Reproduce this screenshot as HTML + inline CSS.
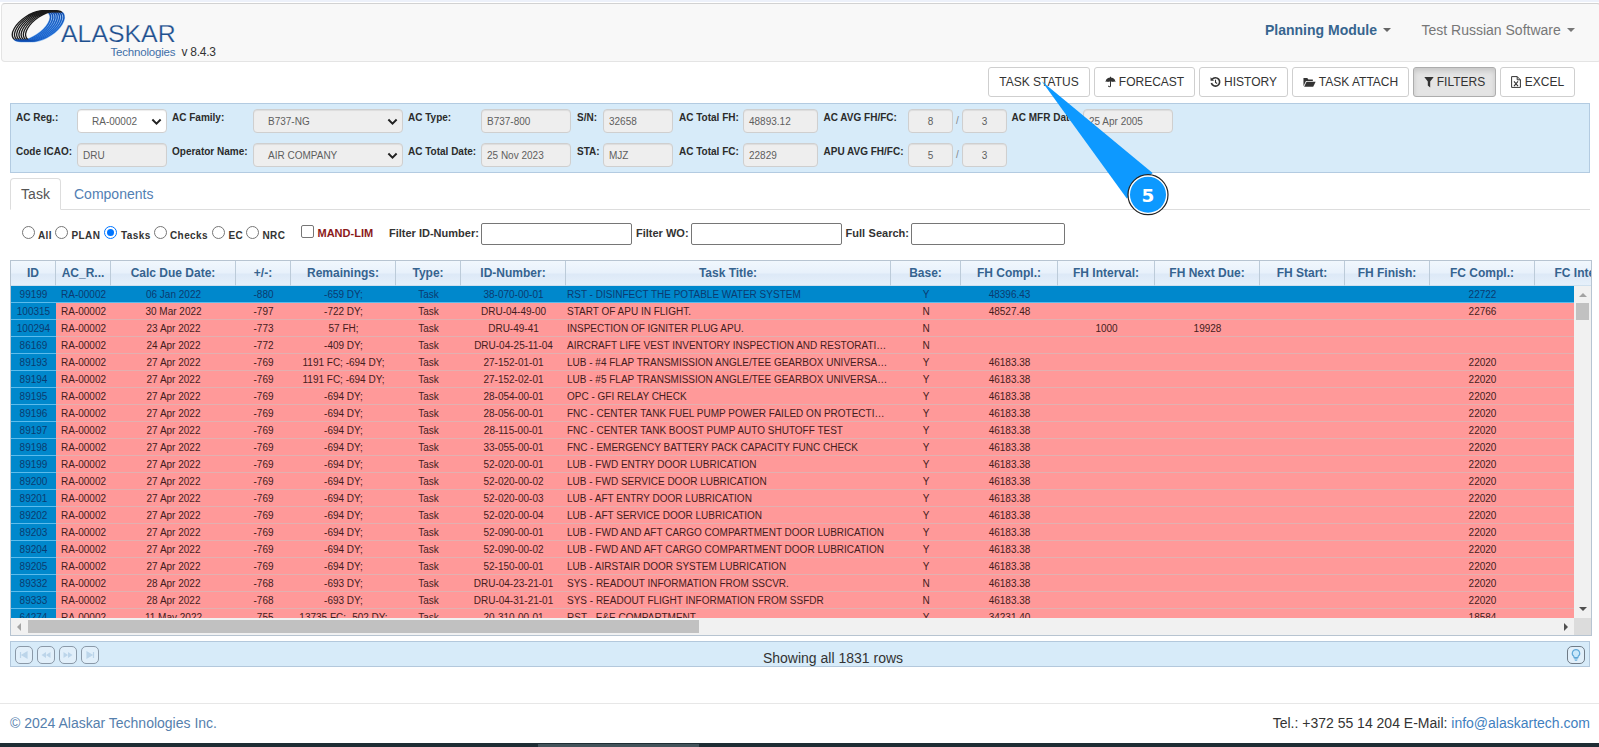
<!DOCTYPE html>
<html lang="en"><head><meta charset="utf-8"><title>Alaskar Technologies - Planning Module</title>
<style>
*{box-sizing:border-box}
html,body{margin:0;padding:0}
body{width:1599px;height:747px;overflow:hidden;background:#fff;position:relative;font-family:"Liberation Sans",Arial,Helvetica,sans-serif;font-size:14px;color:#333}
.abs,.lbl,.inp,.slash,.radio,.rl,.cbx,.tin,.btn{position:absolute}
#topstrip{left:0;top:0;width:1599px;height:2px;background:#edf1fa;position:absolute}
#nav{position:absolute;left:1px;top:3px;width:1600px;height:59px;background:#f8f8f8;border:1px solid #e4e4e4;border-top-color:#d2d2d2;border-radius:4px}
#ring{position:absolute;left:9px;top:4px}
#brand{position:absolute;left:59px;top:15.5px;font-size:24px;line-height:28px;color:#1d4f8f;letter-spacing:0;transform-origin:0 50%;transform:scaleX(1.035);white-space:nowrap;-webkit-text-stroke:0.25px #f8f8f8}
#tech{position:absolute;left:108.5px;top:41px;font-size:11.5px;line-height:14px;color:#3f6fa8;letter-spacing:-0.2px;white-space:nowrap}
#ver{position:absolute;left:179.5px;top:40.5px;font-size:12px;line-height:14px;color:#333;white-space:nowrap;letter-spacing:-0.25px}
.navi{position:absolute;top:18px;font-size:14px;line-height:16px;white-space:nowrap}
.caret{display:inline-block;width:0;height:0;border-left:4px solid transparent;border-right:4px solid transparent;border-top:4px solid currentColor;vertical-align:middle;margin-left:6px;position:relative;top:-1px}
.btn{top:67px;height:30px;border:1px solid #cfcfcf;border-radius:3px;background:#fff;color:#333;font-size:12px;line-height:28px;white-space:nowrap;text-align:center}
.btn.act{background:#e4e4e4;border-color:#adadad;box-shadow:inset 0 3px 5px rgba(0,0,0,.125)}
.btn svg{vertical-align:-2px;margin-right:3px}
#fpanel{position:absolute;left:10px;top:103px;width:1580px;height:70px;background:#d7ebf9;border:1px solid #b3cbe1}
.lbl{font-size:10px;font-weight:bold;line-height:13px;color:#2b2b2b;white-space:nowrap}
.inp{height:24px;border:1px solid #cfcfcf;border-radius:4px;background:#eee;font-size:10px;line-height:22px;padding-top:1px;color:#5e5e5e;padding-left:5px;white-space:nowrap;overflow:hidden;box-shadow:inset 0 1px 1px rgba(0,0,0,.075)}
.inp.white{background:#fff}
.inp.ctr{text-align:center;padding-left:0}
.inp .chev{position:absolute;right:4px;top:8px}
.slash{font-size:10px;color:#888;line-height:13px}
#tabline{position:absolute;left:10px;top:209px;width:1580px;height:1px;background:#ddd}
#tab1{position:absolute;left:10px;top:178px;width:51px;height:32px;border:1px solid #ddd;border-bottom:1px solid #fff;border-radius:4px 4px 0 0;background:#fff;font-size:14px;line-height:20px;padding:5px 0 0 0;text-align:center;color:#555}
#tab2{position:absolute;left:74px;top:184px;font-size:14px;line-height:20px;color:#5280b3;white-space:nowrap}
.radio{top:226px;width:13px;height:13px;border:1px solid #767676;border-radius:50%;background:#fff}
.radio.on{border-color:#0075ff}
.radio.on i{position:absolute;left:2px;top:2px;width:7px;height:7px;border-radius:50%;background:#0075ff}
.cbx{top:224.5px;width:13px;height:13px;border:1px solid #767676;border-radius:2px;background:#fff}
.rl{top:228.5px;letter-spacing:0.4px;font-size:10px;font-weight:bold;line-height:13px;color:#333;white-space:nowrap}
.rl.red{color:#8b1a1a;top:227px;font-size:11px;letter-spacing:0}
.rl.f{top:227px;font-size:11px;letter-spacing:0}
.rl.fs{word-spacing:0.5px}
.tin{top:223px;height:21.5px;border:1px solid #767676;border-radius:2px;background:#fff}
#grid{position:absolute;left:10px;top:260px;width:1582px;height:376px;border:1px solid #b7c4d1;background:#fff;overflow:hidden}
#gwrap{position:absolute;left:0;top:0;width:1580px;height:357px;overflow:hidden}
table{border-collapse:separate;border-spacing:0;table-layout:fixed;width:1630px}
th{height:25px;padding:0;border-right:1px solid #bccbd9;border-bottom:1px solid #cfe0ee;background:linear-gradient(#f1f7fd 0%,#e8f1fb 48%,#dde9f7 56%,#e6f0fa 100%);color:#36638f;font-size:12px;font-weight:bold;text-align:center;white-space:nowrap;overflow:hidden}
td{height:17px;padding:2px 2px 0 2px;border-bottom:1px solid #e2b0b0;font-size:10px;line-height:14px;text-align:center;white-space:nowrap;overflow:hidden;text-overflow:ellipsis;background:#ff9999;color:#451c1c}
td.l{text-align:left;padding-left:5px}
td.t{padding-left:1px;padding-right:2.5px}
td.id{background:#0088cc;color:#0b3b70;border-bottom-color:#5cbcec}
tr.sel td{background:#0088cc;color:#0b3b70;border-bottom-color:#5cbcec}
#vsb{position:absolute;left:1563px;top:25px;width:17px;height:332px;background:#f1f1f1}
#vsb .th{position:absolute;left:2px;top:17px;width:13px;height:17px;background:#c1c1c1}
#hsb{position:absolute;left:0;top:357px;width:1563px;height:17px;background:#f1f1f1}
#hsb .th{position:absolute;left:17px;top:2px;width:671px;height:13px;background:#c1c1c1}
#corner{position:absolute;left:1563px;top:357px;width:17px;height:17px;background:#dcdcdc}
.arr{position:absolute;width:0;height:0}
#pager{position:absolute;left:10px;top:641px;width:1580px;height:26px;background:#d7ebf9;border:1px solid #b3c8dc}
.pb{position:absolute;top:4px;width:18px;height:18px;border:1px solid #8a99a8;border-radius:5px;background:#e1effa}
#ptext{position:absolute;left:0;width:1644px;top:8px;text-align:center;font-size:14px;line-height:16px;color:#333}
#hr{position:absolute;left:0;top:703px;width:1599px;height:1px;background:#e7e7e7}
#f1{position:absolute;left:10px;top:715px;font-size:14px;line-height:16px;color:#5580ad;white-space:nowrap}
#f2{position:absolute;right:9px;top:715px;font-size:14px;line-height:16px;color:#333;white-space:nowrap}
#f2 span{color:#3f7fc0}
#bbar{position:absolute;left:0;top:743px;width:1599px;height:4px;background:#1e2d34}
#bbar i{position:absolute;left:538px;top:1px;width:161px;height:3px;background:#43545b}
#callout{position:absolute;left:1020px;top:60px}
</style></head><body>
<div id="topstrip"></div>
<div id="nav">
 <svg id="ring" width="60" height="40" viewBox="0 0 60 40">
  <defs>
   <linearGradient id="rg" x1="0.42" y1="0" x2="0.58" y2="1"><stop offset="0" stop-color="#1a1a1a"/><stop offset="0.47" stop-color="#1a1a1a"/><stop offset="0.53" stop-color="#0d47a8"/><stop offset="1" stop-color="#1a66d0"/></linearGradient>
   <linearGradient id="ru" x1="0.42" y1="0" x2="0.58" y2="1"><stop offset="0" stop-color="#fff" stop-opacity="0"/><stop offset="0.5" stop-color="#fff" stop-opacity="0"/><stop offset="0.56" stop-color="#8fbdf0"/><stop offset="1" stop-color="#8fbdf0"/></linearGradient>
  </defs>
  <ellipse transform="translate(20.45 17.90) rotate(-33.8)" rx="21.9" ry="10.7" fill="none" stroke="url(#ru)" stroke-width="2.4"/>
  <ellipse transform="translate(22.67 17.90) rotate(-33.8)" rx="21.9" ry="10.7" fill="none" stroke="url(#ru)" stroke-width="2.4"/>
  <ellipse transform="translate(24.88 17.90) rotate(-33.8)" rx="21.9" ry="10.7" fill="none" stroke="url(#ru)" stroke-width="2.4"/>
  <ellipse transform="translate(27.10 17.90) rotate(-33.8)" rx="21.9" ry="10.7" fill="none" stroke="url(#ru)" stroke-width="2.4"/>
  <ellipse transform="translate(29.32 17.90) rotate(-33.8)" rx="21.9" ry="10.7" fill="none" stroke="url(#ru)" stroke-width="2.4"/>
  <ellipse transform="translate(31.53 17.90) rotate(-33.8)" rx="21.9" ry="10.7" fill="none" stroke="url(#ru)" stroke-width="2.4"/>
  <ellipse transform="translate(33.75 17.90) rotate(-33.8)" rx="21.9" ry="10.7" fill="none" stroke="url(#ru)" stroke-width="2.4"/>
  <ellipse transform="translate(20.45 17.90) rotate(-33.8)" rx="21.9" ry="10.7" fill="none" stroke="url(#rg)" stroke-width="1.35"/>
  <ellipse transform="translate(22.67 17.90) rotate(-33.8)" rx="21.9" ry="10.7" fill="none" stroke="url(#rg)" stroke-width="1.35"/>
  <ellipse transform="translate(24.88 17.90) rotate(-33.8)" rx="21.9" ry="10.7" fill="none" stroke="url(#rg)" stroke-width="1.35"/>
  <ellipse transform="translate(27.10 17.90) rotate(-33.8)" rx="21.9" ry="10.7" fill="none" stroke="url(#rg)" stroke-width="1.35"/>
  <ellipse transform="translate(29.32 17.90) rotate(-33.8)" rx="21.9" ry="10.7" fill="none" stroke="url(#rg)" stroke-width="1.35"/>
  <ellipse transform="translate(31.53 17.90) rotate(-33.8)" rx="21.9" ry="10.7" fill="none" stroke="url(#rg)" stroke-width="1.35"/>
  <ellipse transform="translate(33.75 17.90) rotate(-33.8)" rx="21.9" ry="10.7" fill="none" stroke="url(#rg)" stroke-width="1.35"/>
 </svg>
 <div id="brand">ALASKAR</div>
 <div id="tech">Technologies</div>
 <div id="ver">v 8.4.3</div>
 <div class="navi" style="left:1263px;color:#36658f;font-weight:bold">Planning Module<span class="caret" style="color:#666"></span></div>
 <div class="navi" style="left:1419.5px;color:#777">Test Russian Software<span class="caret"></span></div>
</div>

<div class="btn" style="left:988px;width:102px">TASK STATUS</div>
<div class="btn" style="left:1094px;width:101px"><svg width="11" height="12" viewBox="0 0 12 12"><path d="M0.5 6 C1 2.5 3.5 1.2 6 1.2 C8.5 1.2 11 2.5 11.5 6 C10.5 5.2 9.5 5.2 8.7 6 C7.8 5.2 6.8 5.2 6 6 C5.2 5.2 4.2 5.2 3.3 6 C2.5 5.2 1.5 5.2 0.5 6 Z" fill="#333"/><path d="M6 0.3 V1.5 M6 5.5 V10 C6 11.6 3.8 11.6 3.8 10" fill="none" stroke="#333" stroke-width="1.1"/></svg>FORECAST</div>
<div class="btn" style="left:1199px;width:89px"><svg width="11" height="12" viewBox="0 0 12 12"><path d="M2.2 3.2 A4.6 4.6 0 1 1 1.5 7.2" fill="none" stroke="#333" stroke-width="1.8"/><path d="M0.6 0.8 L0.6 4.6 L4.4 4.6 Z" fill="#333"/><path d="M6 3.6 V6.4 L7.8 7.6" fill="none" stroke="#333" stroke-width="1.2"/></svg>HISTORY</div>
<div class="btn" style="left:1292px;width:117px"><svg width="13" height="12" viewBox="0 0 14 12"><path d="M0.5 10.5 V1.8 H4.6 L5.8 3.2 H10.6 V5 H3.2 Z" fill="#333"/><path d="M1.2 11 L3.8 5.8 H13.6 L11 11 Z" fill="#333"/></svg>TASK ATTACH</div>
<div class="btn act" style="left:1413px;width:83px"><svg width="10" height="12" viewBox="0 0 10 12"><path d="M0.3 1 H9.7 L6.2 5.6 V11.4 L3.8 9.6 V5.6 Z" fill="#333"/></svg>FILTERS</div>
<div class="btn" style="left:1500px;width:75px"><svg style="margin-right:4px" width="10" height="12" viewBox="0 0 10 12"><path d="M0.6 0.6 H6.2 L9.4 3.8 V11.4 H0.6 Z M6.2 0.6 V3.8 H9.4" fill="none" stroke="#333" stroke-width="1"/><path d="M3 5.4 L7 10.2 M7 5.4 L3 10.2" stroke="#333" stroke-width="1.1" fill="none"/></svg>EXCEL</div>

<div id="fpanel"></div>
<div class="lbl" style="left:16px;top:111px">AC Reg.:</div><div class="inp white" style="left:77px;top:109px;width:90px;padding-left:14px;">RA-00002<svg class="chev" viewBox="0 0 12 8" width="11" height="7.5"><path d="M1.5 1.5 L6 6 L10.5 1.5" fill="none" stroke="#222" stroke-width="2.1"/></svg></div><div class="lbl" style="left:172px;top:111px">AC Family:</div><div class="inp" style="left:253px;top:109px;width:150px;padding-left:14px;">B737-NG<svg class="chev" viewBox="0 0 12 8" width="11" height="7.5"><path d="M1.5 1.5 L6 6 L10.5 1.5" fill="none" stroke="#222" stroke-width="2.1"/></svg></div><div class="lbl" style="left:408px;top:111px">AC Type:</div><div class="inp" style="left:481px;top:109px;width:90px;">B737-800</div><div class="lbl" style="left:577px;top:111px">S/N:</div><div class="inp" style="left:603px;top:109px;width:70px;">32658</div><div class="lbl" style="left:679px;top:111px">AC Total FH:</div><div class="inp" style="left:743px;top:109px;width:75px;">48893.12</div><div class="lbl" style="left:823.5px;top:111px">AC AVG FH/FC:</div><div class="inp ctr" style="left:908px;top:109px;width:45px;">8</div><div class="slash" style="left:956px;top:114px">/</div><div class="inp ctr" style="left:962px;top:109px;width:45px;">3</div><div class="lbl" style="left:1011.5px;top:111px">AC MFR Date:</div><div class="inp" style="left:1083px;top:109px;width:90px;">25 Apr 2005</div><div class="lbl" style="left:16px;top:145px">Code ICAO:</div><div class="inp" style="left:77px;top:143px;width:90px;">DRU</div><div class="lbl" style="left:172px;top:145px">Operator Name:</div><div class="inp" style="left:253px;top:143px;width:150px;padding-left:14px;">AIR COMPANY<svg class="chev" viewBox="0 0 12 8" width="11" height="7.5"><path d="M1.5 1.5 L6 6 L10.5 1.5" fill="none" stroke="#222" stroke-width="2.1"/></svg></div><div class="lbl" style="left:408px;top:145px">AC Total Date:</div><div class="inp" style="left:481px;top:143px;width:90px;">25 Nov 2023</div><div class="lbl" style="left:577px;top:145px">STA:</div><div class="inp" style="left:603px;top:143px;width:70px;">MJZ</div><div class="lbl" style="left:679px;top:145px">AC Total FC:</div><div class="inp" style="left:743px;top:143px;width:75px;">22829</div><div class="lbl" style="left:823.5px;top:145px">APU AVG FH/FC:</div><div class="inp ctr" style="left:908px;top:143px;width:45px;">5</div><div class="slash" style="left:956px;top:148px">/</div><div class="inp ctr" style="left:962px;top:143px;width:45px;">3</div>
<div id="tabline"></div>
<div id="tab1">Task</div>
<div id="tab2">Components</div>
<div class="radio" style="left:21.5px"></div><div class="rl" style="left:38px;">All</div><div class="radio" style="left:55px"></div><div class="rl" style="left:71.5px;">PLAN</div><div class="radio on" style="left:104px"><i></i></div><div class="rl" style="left:121px;">Tasks</div><div class="radio" style="left:153.5px"></div><div class="rl" style="left:170px;">Checks</div><div class="radio" style="left:212px"></div><div class="rl" style="left:228.5px;">EC</div><div class="radio" style="left:246px"></div><div class="rl" style="left:262.5px;">NRC</div><div class="cbx" style="left:301px"></div><div class="rl red" style="left:317.5px;">MAND-LIM</div><div class="rl f" style="left:389px;">Filter ID-Number:</div><div class="tin" style="left:481px;width:151px"></div><div class="rl f" style="left:636px;">Filter WO:</div><div class="tin" style="left:691px;width:151px"></div><div class="rl f fs" style="left:845.5px;">Full Search:</div><div class="tin" style="left:911px;width:154px"></div>
<div id="grid">
 <div id="gwrap">
 <table>
 <thead><tr><th style="width:45px">ID</th><th style="width:55px">AC_R...</th><th style="width:125px">Calc Due Date:</th><th style="width:55px">+/-:</th><th style="width:105px">Remainings:</th><th style="width:65px">Type:</th><th style="width:105px">ID-Number:</th><th style="width:325px">Task Title:</th><th style="width:70px">Base:</th><th style="width:97px">FH Compl.:</th><th style="width:97px">FH Interval:</th><th style="width:105px">FH Next Due:</th><th style="width:85px">FH Start:</th><th style="width:85px">FH Finish:</th><th style="width:105px">FC Compl.:</th><th style="width:106px">FC Interval:</th></tr></thead>
 <tbody>
<tr class="sel"><td class="id">99199</td><td class="l">RA-00002</td><td>06 Jan 2022</td><td>-880</td><td>-659 DY;</td><td>Task</td><td>38-070-00-01</td><td class="l t">RST - DISINFECT THE POTABLE WATER SYSTEM</td><td>Y</td><td>48396.43</td><td></td><td></td><td></td><td></td><td>22722</td><td></td></tr>
<tr><td class="id">100315</td><td class="l">RA-00002</td><td>30 Mar 2022</td><td>-797</td><td>-722 DY;</td><td>Task</td><td>DRU-04-49-00</td><td class="l t">START OF APU IN FLIGHT.</td><td>N</td><td>48527.48</td><td></td><td></td><td></td><td></td><td>22766</td><td></td></tr>
<tr><td class="id">100294</td><td class="l">RA-00002</td><td>23 Apr 2022</td><td>-773</td><td>57 FH;</td><td>Task</td><td>DRU-49-41</td><td class="l t">INSPECTION OF IGNITER PLUG APU.</td><td>N</td><td></td><td>1000</td><td>19928</td><td></td><td></td><td></td><td></td></tr>
<tr><td class="id">86169</td><td class="l">RA-00002</td><td>24 Apr 2022</td><td>-772</td><td>-409 DY;</td><td>Task</td><td>DRU-04-25-11-04</td><td class="l t">AIRCRAFT LIFE VEST INVENTORY INSPECTION AND RESTORATION</td><td>N</td><td></td><td></td><td></td><td></td><td></td><td></td><td></td></tr>
<tr><td class="id">89193</td><td class="l">RA-00002</td><td>27 Apr 2022</td><td>-769</td><td>1191 FC; -694 DY;</td><td>Task</td><td>27-152-01-01</td><td class="l t">LUB - #4 FLAP TRANSMISSION ANGLE/TEE GEARBOX UNIVERSAL JOINT</td><td>Y</td><td>46183.38</td><td></td><td></td><td></td><td></td><td>22020</td><td></td></tr>
<tr><td class="id">89194</td><td class="l">RA-00002</td><td>27 Apr 2022</td><td>-769</td><td>1191 FC; -694 DY;</td><td>Task</td><td>27-152-02-01</td><td class="l t">LUB - #5 FLAP TRANSMISSION ANGLE/TEE GEARBOX UNIVERSAL JOINT</td><td>Y</td><td>46183.38</td><td></td><td></td><td></td><td></td><td>22020</td><td></td></tr>
<tr><td class="id">89195</td><td class="l">RA-00002</td><td>27 Apr 2022</td><td>-769</td><td>-694 DY;</td><td>Task</td><td>28-054-00-01</td><td class="l t">OPC - GFI RELAY CHECK</td><td>Y</td><td>46183.38</td><td></td><td></td><td></td><td></td><td>22020</td><td></td></tr>
<tr><td class="id">89196</td><td class="l">RA-00002</td><td>27 Apr 2022</td><td>-769</td><td>-694 DY;</td><td>Task</td><td>28-056-00-01</td><td class="l t">FNC - CENTER TANK FUEL PUMP POWER FAILED ON PROTECTION</td><td>Y</td><td>46183.38</td><td></td><td></td><td></td><td></td><td>22020</td><td></td></tr>
<tr><td class="id">89197</td><td class="l">RA-00002</td><td>27 Apr 2022</td><td>-769</td><td>-694 DY;</td><td>Task</td><td>28-115-00-01</td><td class="l t">FNC - CENTER TANK BOOST PUMP AUTO SHUTOFF TEST</td><td>Y</td><td>46183.38</td><td></td><td></td><td></td><td></td><td>22020</td><td></td></tr>
<tr><td class="id">89198</td><td class="l">RA-00002</td><td>27 Apr 2022</td><td>-769</td><td>-694 DY;</td><td>Task</td><td>33-055-00-01</td><td class="l t">FNC - EMERGENCY BATTERY PACK CAPACITY FUNC CHECK</td><td>Y</td><td>46183.38</td><td></td><td></td><td></td><td></td><td>22020</td><td></td></tr>
<tr><td class="id">89199</td><td class="l">RA-00002</td><td>27 Apr 2022</td><td>-769</td><td>-694 DY;</td><td>Task</td><td>52-020-00-01</td><td class="l t">LUB - FWD ENTRY DOOR LUBRICATION</td><td>Y</td><td>46183.38</td><td></td><td></td><td></td><td></td><td>22020</td><td></td></tr>
<tr><td class="id">89200</td><td class="l">RA-00002</td><td>27 Apr 2022</td><td>-769</td><td>-694 DY;</td><td>Task</td><td>52-020-00-02</td><td class="l t">LUB - FWD SERVICE DOOR LUBRICATION</td><td>Y</td><td>46183.38</td><td></td><td></td><td></td><td></td><td>22020</td><td></td></tr>
<tr><td class="id">89201</td><td class="l">RA-00002</td><td>27 Apr 2022</td><td>-769</td><td>-694 DY;</td><td>Task</td><td>52-020-00-03</td><td class="l t">LUB - AFT ENTRY DOOR LUBRICATION</td><td>Y</td><td>46183.38</td><td></td><td></td><td></td><td></td><td>22020</td><td></td></tr>
<tr><td class="id">89202</td><td class="l">RA-00002</td><td>27 Apr 2022</td><td>-769</td><td>-694 DY;</td><td>Task</td><td>52-020-00-04</td><td class="l t">LUB - AFT SERVICE DOOR LUBRICATION</td><td>Y</td><td>46183.38</td><td></td><td></td><td></td><td></td><td>22020</td><td></td></tr>
<tr><td class="id">89203</td><td class="l">RA-00002</td><td>27 Apr 2022</td><td>-769</td><td>-694 DY;</td><td>Task</td><td>52-090-00-01</td><td class="l t">LUB - FWD AND AFT CARGO COMPARTMENT DOOR LUBRICATION</td><td>Y</td><td>46183.38</td><td></td><td></td><td></td><td></td><td>22020</td><td></td></tr>
<tr><td class="id">89204</td><td class="l">RA-00002</td><td>27 Apr 2022</td><td>-769</td><td>-694 DY;</td><td>Task</td><td>52-090-00-02</td><td class="l t">LUB - FWD AND AFT CARGO COMPARTMENT DOOR LUBRICATION</td><td>Y</td><td>46183.38</td><td></td><td></td><td></td><td></td><td>22020</td><td></td></tr>
<tr><td class="id">89205</td><td class="l">RA-00002</td><td>27 Apr 2022</td><td>-769</td><td>-694 DY;</td><td>Task</td><td>52-150-00-01</td><td class="l t">LUB - AIRSTAIR DOOR SYSTEM LUBRICATION</td><td>Y</td><td>46183.38</td><td></td><td></td><td></td><td></td><td>22020</td><td></td></tr>
<tr><td class="id">89332</td><td class="l">RA-00002</td><td>28 Apr 2022</td><td>-768</td><td>-693 DY;</td><td>Task</td><td>DRU-04-23-21-01</td><td class="l t">SYS - READOUT INFORMATION FROM SSCVR.</td><td>N</td><td>46183.38</td><td></td><td></td><td></td><td></td><td>22020</td><td></td></tr>
<tr><td class="id">89333</td><td class="l">RA-00002</td><td>28 Apr 2022</td><td>-768</td><td>-693 DY;</td><td>Task</td><td>DRU-04-31-21-01</td><td class="l t">SYS - READOUT FLIGHT INFORMATION FROM SSFDR</td><td>N</td><td>46183.38</td><td></td><td></td><td></td><td></td><td>22020</td><td></td></tr>
<tr><td class="id">64274</td><td class="l">RA-00002</td><td>11 May 2022</td><td>-755</td><td>13735 FC; -502 DY;</td><td>Task</td><td>20-310-00-01</td><td class="l t">RST - E&amp;E COMPARTMENT</td><td>Y</td><td>34231.40</td><td></td><td></td><td></td><td></td><td>18584</td><td></td></tr>
 </tbody></table>
 </div>
 <div id="vsb"><div class="th"></div>
  <div class="arr" style="left:4.5px;top:7px;border-left:4px solid transparent;border-right:4px solid transparent;border-bottom:4px solid #a3a3a3"></div>
  <div class="arr" style="left:4.5px;top:321px;border-left:4px solid transparent;border-right:4px solid transparent;border-top:4px solid #505050"></div>
 </div>
 <div id="hsb"><div class="th"></div>
  <div class="arr" style="left:6px;top:4.5px;border-top:4px solid transparent;border-bottom:4px solid transparent;border-right:4px solid #a3a3a3"></div>
  <div class="arr" style="left:1553px;top:4.5px;border-top:4px solid transparent;border-bottom:4px solid transparent;border-left:4px solid #505050"></div>
 </div>
 <div id="corner"></div>
</div>

<div id="pager">
 <div class="pb" style="left:4px"><svg width="16" height="16" viewBox="0 0 16 16"><path d="M4.5 5 V11 M11 5 L6 8 L11 11 Z" stroke="#bcd5ea" stroke-width="1.2" fill="#bcd5ea"/></svg></div>
 <div class="pb" style="left:26px"><svg width="16" height="16" viewBox="0 0 16 16"><path d="M8 5 L3.5 8 L8 11 Z M12.5 5 L8 8 L12.5 11 Z" fill="#bcd5ea"/></svg></div>
 <div class="pb" style="left:48px"><svg width="16" height="16" viewBox="0 0 16 16"><path d="M3.5 5 L8 8 L3.5 11 Z M8 5 L12.5 8 L8 11 Z" fill="#bcd5ea"/></svg></div>
 <div class="pb" style="left:70px"><svg width="16" height="16" viewBox="0 0 16 16"><path d="M11.5 5 V11 M5 5 L10 8 L5 11 Z" stroke="#bcd5ea" stroke-width="1.2" fill="#bcd5ea"/></svg></div>
 <div id="ptext">Showing all 1831 rows</div>
 <div class="pb" style="left:1556px;border-color:#6f7b87"><svg width="16" height="16" viewBox="0 0 16 16"><path d="M8 2.6 A3.7 3.7 0 0 1 10.2 9.3 L9.9 10.6 H6.1 L5.8 9.3 A3.7 3.7 0 0 1 8 2.6 Z" fill="#c9e8fb" stroke="#5fa8d8" stroke-width="1.1"/><path d="M6.3 11.8 H9.7 M6.8 13.2 H9.2" stroke="#5fa8d8" stroke-width="1"/></svg></div>
</div>

<div id="hr"></div>
<div id="f1">© 2024 Alaskar Technologies Inc.</div>
<div id="f2">Tel.: +372 55 14 204 E-Mail: <span>info@alaskartech.com</span></div>
<div id="bbar"><i></i></div>

<svg id="callout" width="170" height="170" viewBox="1020 60 170 170">
 <path d="M1041.8 81.3 L1152.6 173 L1126.8 198.4 Z" fill="#0d99ff"/>
 <circle cx="1148" cy="194.7" r="20" fill="#fff" stroke="#222" stroke-width="1.2"/>
 <circle cx="1148" cy="194.7" r="18" fill="#0d99ff"/>
 <text x="1148" y="201.8" text-anchor="middle" font-family="'DejaVu Sans','Liberation Sans',sans-serif" font-weight="bold" font-size="18.5" fill="#fff">5</text>
</svg>
</body></html>
